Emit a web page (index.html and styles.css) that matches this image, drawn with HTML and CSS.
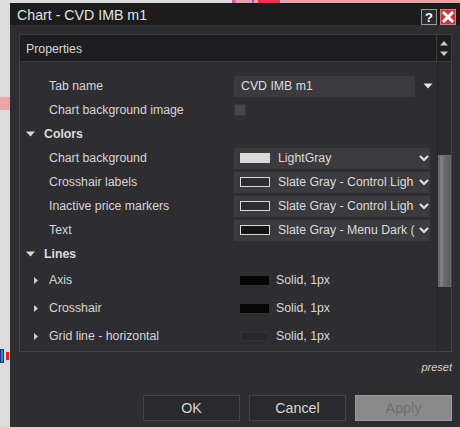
FILE: index.html
```html
<!DOCTYPE html>
<html>
<head>
<meta charset="utf-8">
<link rel="stylesheet" href="styles.css">
</head>
<body>
<div class="page">
  <div class="strip"></div>
  <div class="main">
    <div class="side">
      <div class="side-gap1"></div>
      <div class="side-pink"></div>
      <div class="side-gap2"></div>
      <div class="side-candle"><span class="c-blue"></span><span class="c-red"></span></div>
    </div>
    <div class="dialog">
      <div class="titlebar">
        <div class="title">Chart - CVD IMB m1</div>
        <div class="tbtn help">?</div>
        <div class="tbtn close">
          <svg width="12" height="12" viewBox="0 0 12 12"><path d="M2 2 L10 10 M10 2 L2 10" stroke="#fff" stroke-width="3" stroke-linecap="square"/></svg>
        </div>
      </div>
      <div class="body">
        <div class="props-head">
          <div class="props-title">Properties</div>
          <div class="spin">
            <svg width="10" height="6" viewBox="0 0 10 6"><path d="M1 5.5 L5 1 L9 5.5 Z" fill="#c8c8c8"/></svg>
            <svg width="10" height="6" viewBox="0 0 10 6"><path d="M1 0.5 L5 5 L9 0.5 Z" fill="#c8c8c8"/></svg>
          </div>
        </div>
        <div class="grid">
          <div class="rows">
            <div class="row">
              <div class="label">Tab name</div>
              <div class="value">
                <div class="textbox">CVD IMB m1</div>
                <svg class="ddarrow" width="10" height="6" viewBox="0 0 10 6"><path d="M0.5 0.5 L9.5 0.5 L5 5.5 Z" fill="#e6e6e6"/></svg>
              </div>
            </div>
            <div class="row">
              <div class="label">Chart background image</div>
              <div class="value"><div class="checkbox"></div></div>
            </div>
            <div class="row group">
              <svg class="gtri" width="9" height="6" viewBox="0 0 9 6"><path d="M0 0.5 L9 0.5 L4.5 5.5 Z" fill="#d8d8d8"/></svg>
              <div class="glabel">Colors</div>
            </div>
            <div class="row">
              <div class="label">Chart background</div>
              <div class="value">
                <div class="dropdown">
                  <span class="sw sw-light"></span>
                  <span class="dd-text">LightGray</span>
                  <svg class="chev" width="10" height="7" viewBox="0 0 10 7"><path d="M1 1 L5 5 L9 1" stroke="#e6e6e6" stroke-width="2" fill="none"/></svg>
                </div>
              </div>
            </div>
            <div class="row">
              <div class="label">Crosshair labels</div>
              <div class="value">
                <div class="dropdown">
                  <span class="sw sw-outline"></span>
                  <span class="dd-text">Slate Gray - Control Ligh</span>
                  <svg class="chev" width="10" height="7" viewBox="0 0 10 7"><path d="M1 1 L5 5 L9 1" stroke="#e6e6e6" stroke-width="2" fill="none"/></svg>
                </div>
              </div>
            </div>
            <div class="row">
              <div class="label">Inactive price markers</div>
              <div class="value">
                <div class="dropdown">
                  <span class="sw sw-outline"></span>
                  <span class="dd-text">Slate Gray - Control Ligh</span>
                  <svg class="chev" width="10" height="7" viewBox="0 0 10 7"><path d="M1 1 L5 5 L9 1" stroke="#e6e6e6" stroke-width="2" fill="none"/></svg>
                </div>
              </div>
            </div>
            <div class="row">
              <div class="label">Text</div>
              <div class="value">
                <div class="dropdown">
                  <span class="sw sw-dark"></span>
                  <span class="dd-text">Slate Gray - Menu Dark (</span>
                  <svg class="chev" width="10" height="7" viewBox="0 0 10 7"><path d="M1 1 L5 5 L9 1" stroke="#e6e6e6" stroke-width="2" fill="none"/></svg>
                </div>
              </div>
            </div>
            <div class="row group">
              <svg class="gtri" width="9" height="6" viewBox="0 0 9 6"><path d="M0 0.5 L9 0.5 L4.5 5.5 Z" fill="#d8d8d8"/></svg>
              <div class="glabel">Lines</div>
            </div>
            <div class="row tall">
              <svg class="ctri" width="4" height="7" viewBox="0 0 4 7"><path d="M0 0 L4 3.5 L0 7 Z" fill="#cfcfcf"/></svg>
              <div class="label sub">Axis</div>
              <div class="value line-val"><span class="lsw lsw-black"></span><span class="ltext">Solid, 1px</span></div>
            </div>
            <div class="row tall">
              <svg class="ctri" width="4" height="7" viewBox="0 0 4 7"><path d="M0 0 L4 3.5 L0 7 Z" fill="#cfcfcf"/></svg>
              <div class="label sub">Crosshair</div>
              <div class="value line-val"><span class="lsw lsw-black"></span><span class="ltext">Solid, 1px</span></div>
            </div>
            <div class="row tall">
              <svg class="ctri" width="4" height="7" viewBox="0 0 4 7"><path d="M0 0 L4 3.5 L0 7 Z" fill="#cfcfcf"/></svg>
              <div class="label sub">Grid line - horizontal</div>
              <div class="value line-val"><span class="lsw lsw-grid"></span><span class="ltext">Solid, 1px</span></div>
            </div>
          </div>
          <div class="scroll">
            <div class="thumb"></div>
          </div>
        </div>
        <div class="preset">preset</div>
        <div class="buttons">
          <div class="btn">OK</div>
          <div class="btn">Cancel</div>
          <div class="btn disabled">Apply</div>
        </div>
      </div>
    </div>
  </div>
</div>
</body>
</html>
```

FILE: styles.css
```css
* { box-sizing: border-box; }
html, body { margin: 0; padding: 0; }
body {
  background: #dcdcdc;
  font-family: "Liberation Sans", Arial, sans-serif;
  width: 460px;
  height: 427px;
  overflow: hidden;
}
.page { display: flex; flex-direction: column; width: 460px; height: 427px; }
.strip {
  height: 3px;
  flex: none;
  background: linear-gradient(to right,
    #dcdcdc 0, #dcdcdc 232px,
    #d040d0 232px, #e07a9a 236px,
    #eaa0a8 236px, #eaa0a8 252px,
    #8060c0 252px, #8060c0 254px,
    #eaa0a8 254px, #eaa0a8 258px,
    #f03050 258px, #f03050 280px,
    #eaa0a8 280px, #eaa0a8 460px);
}
.main { display: flex; flex: 1; }
.side { width: 10px; flex: none; display: flex; flex-direction: column; }
.side-gap1 { height: 94px; }
.side-pink { height: 13px; background: #eaa5a8; }
.side-gap2 { height: 236px; }
.side-candle { height: 20px; display: flex; gap: 2px; align-items: center; }
.c-blue { width: 4px; height: 14px; background: #2f80e0; border: 1px solid #1a3a70; }
.c-red { width: 3px; height: 8px; background: #e02020; }

.dialog {
  flex: 1;
  display: flex;
  flex-direction: column;
  background: #2e2d31;
}
.titlebar {
  height: 22px;
  background: #1c1c1d;
  display: flex;
  align-items: center;
  padding: 0 4px 0 7px;
  gap: 3px;
}
.title {
  flex: 1;
  color: #e2e2e2;
  font-size: 14.2px;
  padding-top: 1px;
}
.tbtn {
  width: 16px;
  height: 16px;
  display: flex;
  align-items: center;
  justify-content: center;
  margin-top: 6px;
}
.help {
  background: #2b2b2e;
  border: 1px solid #9a9a9a;
  color: #fff;
  font-weight: bold;
  font-size: 13px;
}
.close {
  background: #c8343c;
  border: 1px solid #d87a7e;
}

.body {
  flex: 1;
  display: flex;
  flex-direction: column;
  padding: 9px 8px 0 9px;
}
.props-head {
  height: 28px;
  background: #1e1e20;
  border: 1px solid #3c3c3f;
  display: flex;
  align-items: center;
}
.props-title {
  flex: 1;
  color: #d6d6d6;
  font-size: 12.3px;
  padding-left: 6px;
  padding-top: 2px;
}
.spin {
  width: 15px;
  height: 100%;
  border-left: 1px solid #3c3c3f;
  display: flex;
  flex-direction: column;
  align-items: center;
  justify-content: center;
  gap: 5px;
}
.grid {
  height: 290px;
  border: 1px solid #444447;
  border-top: none;
  display: flex;
}
.rows {
  flex: 1;
  padding-top: 12px;
  display: flex;
  flex-direction: column;
}
.row {
  height: 24px;
  display: flex;
  align-items: center;
  color: #d6d6d6;
  font-size: 12.3px;
}
.row.tall { height: 28px; }
.label {
  width: 214px;
  padding-left: 29px;
  white-space: nowrap;
}
.ctri { margin-left: 14px; flex: none; }
.label.sub { padding-left: 11px; width: 196px; }
.gtri { margin-left: 6px; flex: none; }
.glabel {
  padding-left: 9px;
  font-weight: bold;
  color: #dcdcdc;
}
.value {
  flex: 1;
  display: flex;
  align-items: center;
}
.textbox {
  width: 181px;
  height: 21px;
  background: #3b3a3e;
  color: #dedede;
  font-size: 12.3px;
  padding-left: 7px;
  display: flex;
  align-items: center;
}
.ddarrow { margin-left: 8px; }
.checkbox {
  width: 12px;
  height: 12px;
  background: #47464a;
  border: 1px solid #3a393c;
}
.dropdown {
  width: 196px;
  height: 21px;
  background: #3b3a3e;
  display: flex;
  align-items: center;
  padding-left: 6px;
}
.sw {
  width: 30px;
  height: 10px;
  flex: none;
}
.sw-light { background: #d9d9d9; }
.sw-outline { border: 1px solid #d8d8d8; background: #2e2d31; }
.sw-dark { border: 1px solid #d8d8d8; background: #151515; }
.dd-text {
  width: 139px;
  margin-left: 8px;
  white-space: nowrap;
  color: #dcdcdc;
  font-size: 12.3px;
  flex: none;
}
.chev { margin-left: 2px; flex: none; }
.line-val { gap: 7px; padding-left: 6px; }
.lsw { width: 29px; height: 9px; display: inline-block; }
.lsw-black { background: #050505; }
.lsw-grid { background: #29282b; border: 1px solid #343336; }
.ltext { color: #d8d8d8; font-size: 12.3px; }
.scroll {
  width: 14px;
  display: flex;
  flex-direction: column;
  border-left: 1px solid #262528;
  background: #2c2b2f;
}
.thumb {
  margin-top: 93px;
  height: 132px;
  background: linear-gradient(to right, #5a595c 0, #8a898c 2px, #6d6c70 5px, #5a595d 100%);
  border: 1px solid #6e6d71;
}
.preset {
  text-align: right;
  font-style: italic;
  font-size: 11px;
  color: #d0d0d0;
  margin-top: 9px;
  height: 14px;
}
.buttons {
  display: flex;
  justify-content: flex-end;
  gap: 9px;
  margin-top: 20px;
}
.btn {
  width: 97px;
  height: 26px;
  background: #2a292c;
  border: 1px solid #454448;
  color: #d6d6d6;
  font-size: 14.3px;
  display: flex;
  align-items: center;
  justify-content: center;
}
.btn.disabled {
  background: #8a8a8a;
  border-color: #9c9c9c;
  color: #6e6e6e;
}
```
